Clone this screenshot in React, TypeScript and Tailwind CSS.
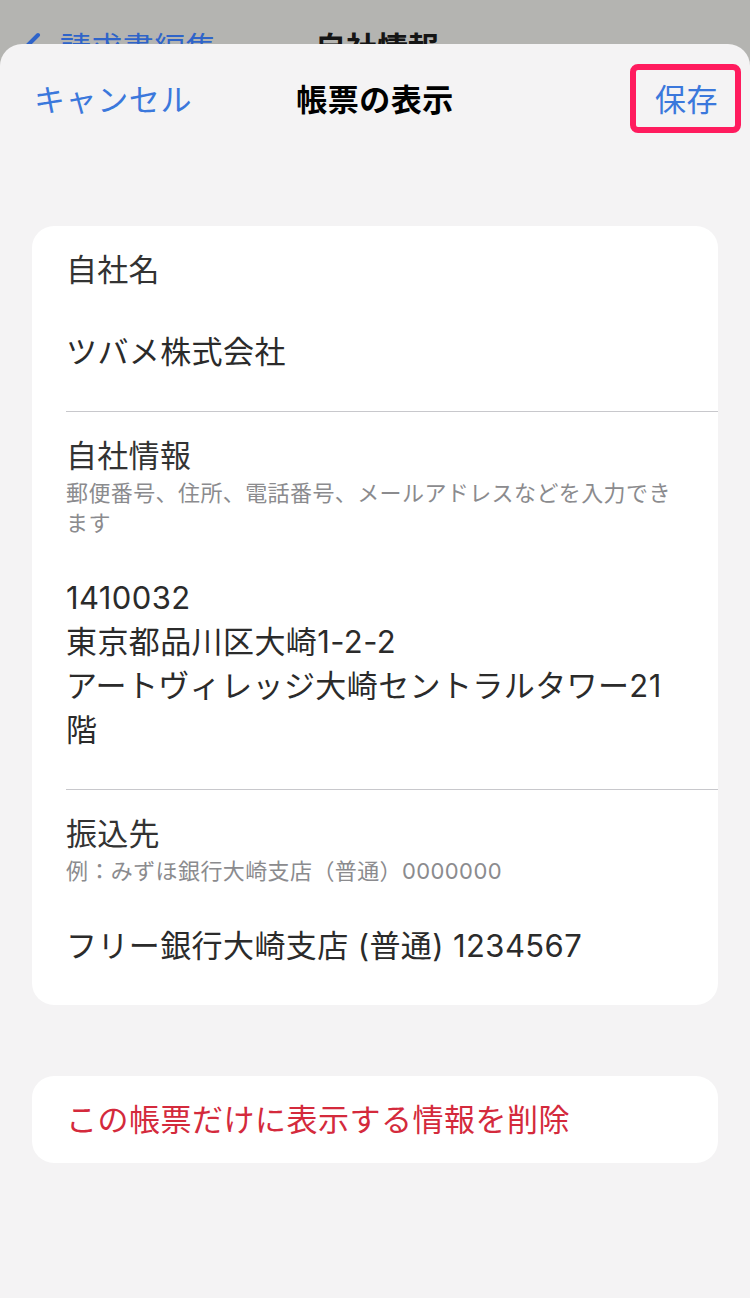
import React from "react";

const font = { fontFamily: 'Inter, "Noto Sans CJK JP", "Noto Sans", sans-serif' };

function Row({
  label,
  helper,
  values,
  last,
}: {
  label: string;
  helper?: string;
  values: string[];
  last?: boolean;
}) {
  return (
    <div className={`pr-[42px] pt-[22px] pb-[37px] ${last ? "" : "border-b border-[#c8c8cc]"}`}>
      <div className="text-[31px] leading-[44px] tracking-[0.3px] text-[#333333]">{label}</div>
      {helper && (
        <div className="text-[22px] leading-[30px] tracking-[0.4px] text-[#8b8b8e]">{helper}</div>
      )}
      <div className="mt-[38px] text-[31px] leading-[44px] tracking-[0.4px] text-[#2b2b2b]">
        {values.map((v, i) => (
          <div key={i}>{v}</div>
        ))}
      </div>
    </div>
  );
}

export default function App() {
  return (
    <div className="w-[750px] h-[1298px] overflow-hidden bg-[#b4b4b1]" style={font}>
      {/* dimmed screen behind the sheet */}
      <div className="h-[100px] flex items-start pt-[26px] pl-[20px]">
        <svg width="22" height="30" viewBox="0 0 22 30" className="mt-[6px]">
          <path d="M18 3 L5 16 L18 29" fill="none" stroke="#2f64c9" strokeWidth="4" strokeLinecap="round" strokeLinejoin="round" />
        </svg>
        <span className="ml-[18px] text-[31px] leading-[44px] tracking-[0.4px] text-[#2f64c9]">請求書編集</span>
        <span className="ml-[98px] text-[31px] leading-[44px] font-bold text-[#151515]">自社情報</span>
      </div>

      {/* sheet */}
      <div className="relative -mt-[56px] h-[1254px] rounded-t-[22px] bg-[#f4f3f4]">
        <div className="relative h-[112px] flex items-center justify-between pl-[34px] pr-[32px]">
          <span className="text-[31px] leading-[44px] tracking-[0.6px] text-[#3b78dc]">キャンセル</span>
          <span className="absolute left-0 right-0 text-center text-[31px] leading-[44px] tracking-[0.5px] font-bold text-black pointer-events-none">
            帳票の表示
          </span>
          <span className="relative text-[31px] leading-[44px] tracking-[0.5px] text-[#3b78dc]">
            保存
            <span className="absolute -left-[25px] -right-[23px] -top-[14px] -bottom-[11px] border-[6px] border-[#ff1b5e] rounded-[8px]" />
          </span>
        </div>

        <div className="px-[32px] pt-[70px]">
          <div className="rounded-[22px] bg-white pl-[34px]">
            <Row label="自社名" values={["ツバメ株式会社"]} />
            <Row
              label="自社情報"
              helper="郵便番号、住所、電話番号、メールアドレスなどを入力できます"
              values={["1410032", "東京都品川区大崎1-2-2", "アートヴィレッジ大崎セントラルタワー21階"]}
            />
            <Row
              label="振込先"
              helper="例：みずほ銀行大崎支店（普通）0000000"
              values={["フリー銀行大崎支店 (普通) 1234567"]}
              last
            />
          </div>

          <div className="mt-[71px] h-[87px] rounded-[22px] bg-white pl-[34px] flex items-center">
            <span className="text-[31px] leading-[44px] tracking-[0.5px] text-[#d42a3c]">この帳票だけに表示する情報を削除</span>
          </div>
        </div>
      </div>
    </div>
  );
}
